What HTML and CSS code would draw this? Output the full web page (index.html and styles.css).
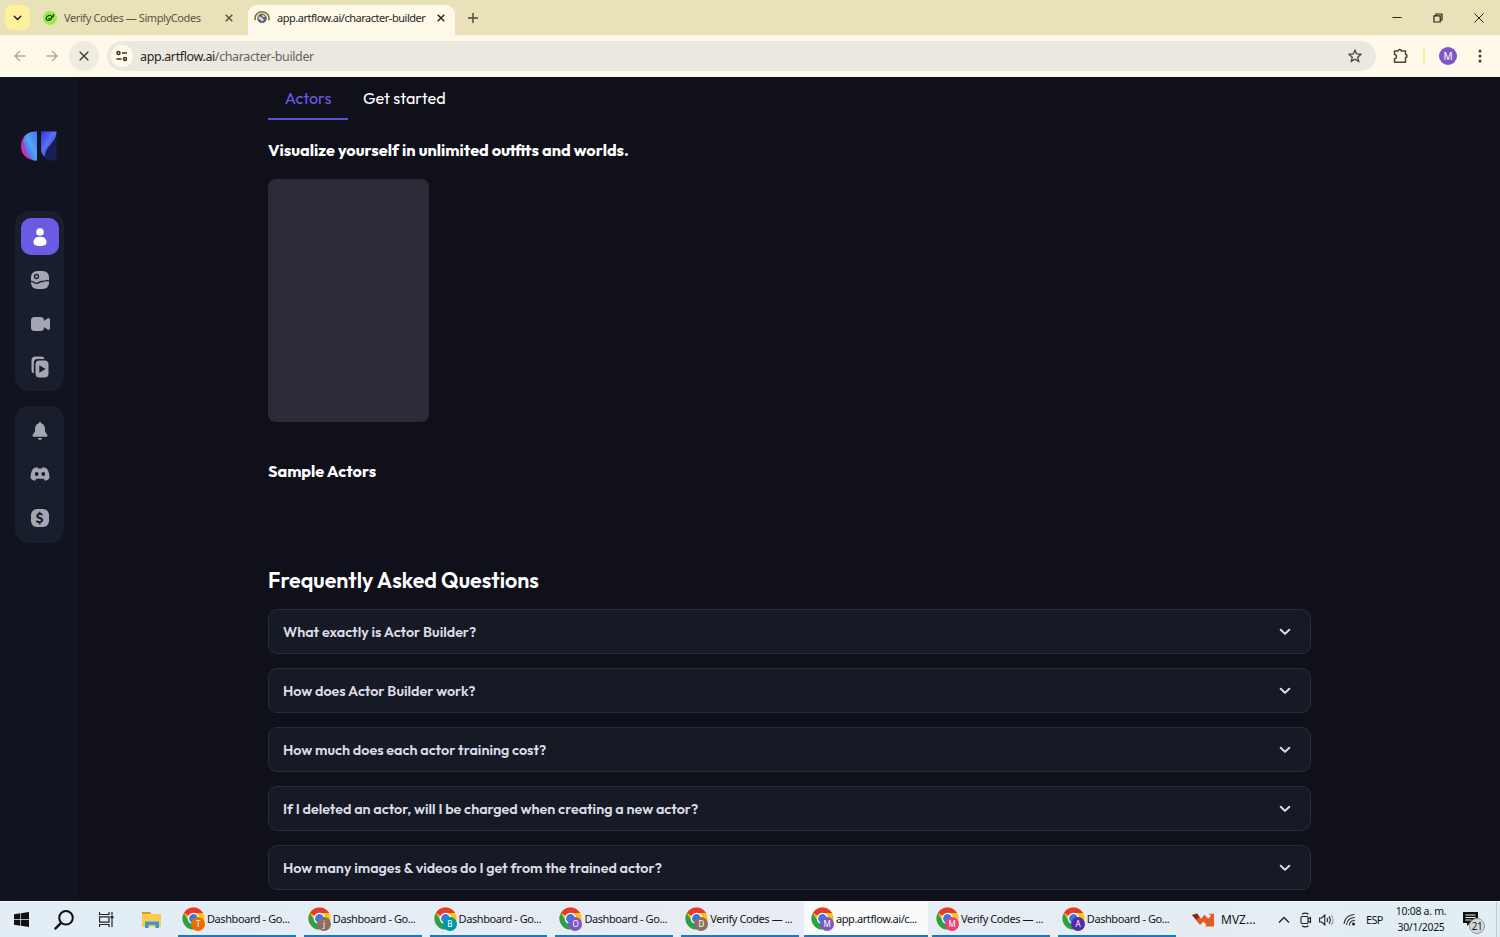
FILE: index.html
```html
<!DOCTYPE html>
<html lang="en">
<head>
    <meta charset="UTF-8">
    <meta name="viewport" content="width=device-width, initial-scale=1.0">
    <title>app.artflow.ai/character-builder</title>
    <link rel="stylesheet" href="styles.css">
</head>
<body>
    <!-- shared icons -->
    <svg class="defs" width="0" height="0">
        <symbol id="chrome" viewBox="0 0 24 24">
            <circle cx="12" cy="12" r="11.5" fill="#fbc116"/>
            <path d="M12 12 2 6.2A11.5 11.5 0 0 1 22 6.3H12z" fill="#e33b2e"/>
            <path d="M2 6.2A11.5 11.5 0 0 0 11.5 23.5L17 15 12 12 7 14.8z" fill="#2ba14b"/>
            <circle cx="12" cy="12" r="5.9" fill="#fff"/>
            <circle cx="12" cy="12" r="4.6" fill="#3b78e7"/>
        </symbol>
        <symbol id="close" viewBox="0 0 10 10">
            <path d="M1.7 1.7 8.3 8.3M8.3 1.7 1.7 8.3" fill="none" stroke="currentColor" stroke-width="1.5"/>
        </symbol>
        <symbol id="chevron" viewBox="0 0 12 8">
            <path d="M1.7 1.7 6 5.9 10.3 1.7" fill="none" stroke="currentColor" stroke-width="2" stroke-linecap="round" stroke-linejoin="round"/>
        </symbol>
    </svg>

    <div class="tab-strip">
        <div class="tab-search">
            <svg width="9" height="6"><use href="#chevron"/></svg>
        </div>
        <div class="tab">
            <svg width="14" height="14" viewBox="0 0 14 14">
                <circle cx="7" cy="7" r="7" fill="#9bea4f"/>
                <path d="M8.3 4.600C5 3.800 2.900 6 3.200 8c.4 2.200 4.200 1.700 5.600-.8M5.300 7.300l2 1.200 3.800-5.400M8.200 5.600h2.600" fill="none" stroke="#1c3b16" stroke-width="1.300"/>
            </svg>
            <span class="tab-title title-simply">Verify Codes — SimplyCodes</span>
            <svg class="tab-close" width="10" height="10"><use href="#close"/></svg>
        </div>
        <div class="tab tab-active">
            <svg width="16" height="16" viewBox="0 0 16 16">
                <path d="M1.200 10.300A7 7 0 1 1 14.800 10.300" fill="none" stroke="#7a6c13" stroke-width="1.500"/>
                <circle cx="8" cy="8.300" r="4.800" fill="#5e6268"/>
                <path d="M4.500 6.800c2-.8 2.800.4 3.800 1.300s1.700 1 1.200 2.300l-2 1.200c.2-1.800-2.600-2-3.300-3.300zM8.500 4.600l2.800 1.400-1.200 1.600-2-1.300z" fill="#d5d6d2"/>
            </svg>
            <span class="tab-title title-artflow">app.artflow.ai/character-builder</span>
            <svg class="tab-close" width="10" height="10"><use href="#close"/></svg>
        </div>
        <svg class="new-tab" width="10" height="10" viewBox="0 0 10 10"><path d="M5 0v10M0 5h10" stroke="#4a4632" stroke-width="1.400"/></svg>
        <div class="window-buttons">
            <svg width="10" height="10" viewBox="0 0 10 10"><path d="M.5 4.500h9" stroke="#25231b"/></svg>
            <svg width="10" height="10" viewBox="0 0 10 10"><path d="M1 2.800h6.200V9H1zM3 2.500V1h6v6H7.500" fill="none" stroke="#25231b" stroke-width="1.200"/></svg>
            <svg width="10" height="10" viewBox="0 0 10 10"><path d="M.5.5l9 9M9.500.5l-9 9" stroke="#25231b"/></svg>
        </div>
    </div>

    <div class="toolbar">
        <div class="nav-btn"><svg width="12" height="12" viewBox="0 0 12 12"><path d="M11.500 6H1.200M6 1 1 6l5 5" fill="none" stroke="#aaa797" stroke-width="1.400"/></svg></div>
        <div class="nav-btn"><svg width="12" height="12" viewBox="0 0 12 12"><path d="M.5 6h10.300M6 1l5 5-5 5" fill="none" stroke="#aaa797" stroke-width="1.400"/></svg></div>
        <div class="nav-btn nav-stop"><svg width="10" height="10" viewBox="0 0 10 10"><path d="M.7.7l8.600 8.600M9.300.7.7 9.300" stroke="#45433b" stroke-width="1.500"/></svg></div>
        <div class="omnibox">
            <div class="site-info">
                <svg width="12" height="12" viewBox="0 0 12 12"><g fill="none" stroke="#35342e" stroke-width="1.500"><circle cx="2.500" cy="3" r="1.500"/><path d="M6 3h5M.5 9h5"/><circle cx="9" cy="9" r="1.500"/></g></svg>
            </div>
            <div class="url">app.artflow.ai<span>/character-builder</span></div>
            <svg class="star" width="14" height="14" viewBox="0 0 14 14"><path d="M7 1.200 8.700 5l4.200.4-3.200 2.800 1 4.200L7 10.200l-3.700 2.200 1-4.200L1.100 5.400 5.300 5z" fill="none" stroke="#45433a" stroke-width="1.300"/></svg>
        </div>
        <svg class="extensions" width="16" height="16" viewBox="0 0 16 16"><path d="M1.500 3h3.700c0-2 3-2 3 0h4.300v3.600c2 0 2 3 0 3v4.600h-11v-3.500c2.600-.2 2.600-3.900 0-4.100z" fill="none" stroke="#4a4730" stroke-width="1.500" stroke-linejoin="round"/></svg>
        <div class="divider"></div>
        <div class="profile">M</div>
        <svg class="menu" width="4" height="14" viewBox="0 0 4 14" fill="#403e31"><circle cx="2" cy="2" r="1.500"/><circle cx="2" cy="7" r="1.500"/><circle cx="2" cy="12" r="1.500"/></svg>
    </div>

    <div class="app">
        <div class="sidebar">
            <svg class="logo" width="36" height="30" viewBox="0 0 36 30">
                <defs>
                    <linearGradient id="logoLeft" x1="0" y1="1" x2="1" y2="0"><stop offset="0" stop-color="#3d52e8"/><stop offset=".55" stop-color="#54a2f4"/><stop offset="1" stop-color="#3c78f0"/></linearGradient>
                    <linearGradient id="logoRight" x1="0" y1="0" x2="1" y2="1"><stop offset="0" stop-color="#3036d8"/><stop offset=".45" stop-color="#5b6ff5"/><stop offset="1" stop-color="#252b8c"/></linearGradient>
                </defs>
                <path d="M16 .5C5 .5 0 7 0 15s5 14.500 16 14.500z" fill="#cb2fae"/>
                <path d="M16 .5C8 .5 3 3.500 2.600 9 3 17 6 26 13 29.500h3z" fill="url(#logoLeft)"/>
                <path d="M20 .5h15.500v29H31c-7 0-11-4-11-11z" fill="#1a1d55"/>
                <path d="M20 .5h15.500C35 13 25 13 24 25.500c-2.500-1.800-4-4-4-7z" fill="url(#logoRight)"/>
            </svg>
            <div class="side-group">
                <div class="side-item side-active">
                    <svg width="14" height="20" viewBox="0 0 14 20" fill="#fff"><circle cx="7" cy="5" r="3.800"/><path d="M4.500 10h5c2.200 0 4 3 4 5.500C13.500 18 11 19 7 19S.5 18 .5 15.500C.5 13 2.300 10 4.500 10z"/></svg>
                </div>
                <div class="side-item">
                    <svg width="18" height="18" viewBox="0 0 18 18"><rect width="18" height="18" rx="6" fill="#a5a6b4"/><circle cx="5.500" cy="5.500" r="2" fill="none" stroke="#181e2b" stroke-width="1.300"/><path d="M0 10.500c2.500-.5 3.500 2.500 6 1.800 2.200-.6 2.800-2 5-1.800 2.500.2 4-2 7-.5" fill="none" stroke="#181e2b" stroke-width="1.300"/></svg>
                </div>
                <div class="side-item">
                    <svg class="video" width="19" height="14" viewBox="0 0 19 14" fill="#a5a6b4"><rect width="13" height="14" rx="3.500"/><path d="M12 4.500 16.500 1.500c1.500-.7 2.500 0 2.500 1.500v8c0 1.500-1 2.200-2.500 1.500L12 9.500z"/></svg>
                </div>
                <div class="side-item">
                    <svg class="clips" width="18" height="22" viewBox="0 0 18 22"><path d="M2.800 17.500C1.200 17 .5 15.800.5 14V4.500c0-2.500 1.500-4 4-4H10c1.700 0 3 .7 3.500 2.500H7C4.300 3 2.800 4.500 2.800 7z" fill="#a5a6b4"/><rect x="4.500" y="4.500" width="13" height="17" rx="4" fill="#a5a6b4"/><path d="M8.300 9.300v7.400l6.300-3.700z" fill="#181e2b"/></svg>
                </div>
            </div>
            <div class="side-group side-group-bottom">
                <div class="side-item">
                    <svg width="16" height="18" viewBox="0 0 16 18" fill="#a5a6b4"><path d="M8 0c.8 0 1 .5 1.100 1.200C11.500 1.800 13 3.800 13 7v2.500c.8 1.500 2.500 3 2.500 4.200 0 .8-.8 1.100-2 1.100h-11c-1.200 0-2-.3-2-1.100C.5 12.500 2.200 11 3 9.500V7c0-3.200 1.500-5.200 3.900-5.800C7 .5 7.200 0 8 0zM6 16h4c-.2 1.200-.9 2-2 2s-1.800-.8-2-2z"/></svg>
                </div>
                <div class="side-item">
                    <svg width="20" height="14" viewBox="0 0 20 14"><path d="M7.500.2 8 1.500h4l.5-1.300c2 .2 3.500.8 4.500 1.500 1.800 2.700 2.700 6 2.400 9.700-1.200 1.100-2.700 1.800-4.400 2.300l-1.200-2H6.200l-1.200 2C3.300 13.200 1.800 12.500.6 11.400.3 7.700 1.200 4.400 3 1.700 4 1 5.500.4 7.500.2z" fill="#a5a6b4"/><circle cx="6.700" cy="7" r="1.900" fill="#181e2b"/><circle cx="13.300" cy="7" r="1.900" fill="#181e2b"/></svg>
                </div>
                <div class="side-item">
                    <div class="credits">$</div>
                </div>
            </div>
        </div>

        <div class="content">
            <div class="page-tabs">
                <div class="page-tab page-tab-active">Actors</div>
                <div class="page-tab">Get started</div>
            </div>
            <h2 class="tagline">Visualize yourself in unlimited outfits and worlds.</h2>
            <div class="actor-placeholder"></div>
            <h2 class="sample-title">Sample Actors</h2>
            <h1 class="faq-title">Frequently Asked Questions</h1>
            <div class="faq-list">
                <div class="faq-item"><span>What exactly is Actor Builder?</span><svg width="12" height="8"><use href="#chevron"/></svg></div>
                <div class="faq-item"><span>How does Actor Builder work?</span><svg width="12" height="8"><use href="#chevron"/></svg></div>
                <div class="faq-item"><span>How much does each actor training cost?</span><svg width="12" height="8"><use href="#chevron"/></svg></div>
                <div class="faq-item"><span>If I deleted an actor, will I be charged when creating a new actor?</span><svg width="12" height="8"><use href="#chevron"/></svg></div>
                <div class="faq-item"><span>How many images &amp; videos do I get from the trained actor?</span><svg width="12" height="8"><use href="#chevron"/></svg></div>
            </div>
        </div>
    </div>

    <div class="taskbar">
        <div class="launchers">
            <svg width="15" height="15" viewBox="0 0 15 15" fill="#111"><path d="M0 2.200 6.300 1.300V7H0zM7 1.200 15 0v7H7zM0 7.800h6.300v5.900L0 12.800zM7 7.800h8V15l-8-1.200z"/></svg>
            <svg width="20" height="20" viewBox="0 0 20 20"><circle cx="12" cy="7.800" r="6.800" fill="none" stroke="#111" stroke-width="2"/><path d="M7.300 12.700.8 19.200" stroke="#111" stroke-width="2.400"/></svg>
            <svg width="15" height="15" viewBox="0 0 15 15"><path d="M.5 0v2.500h9.500V0M.5 4.800h9.500v5.400H.5zM.5 15v-2.500h9.500V15M13 0v3.500M13 7v8" fill="none" stroke="#222" stroke-width="1.200"/><path d="M11.500 4h3v2.500h-3z" fill="#222"/></svg>
            <svg class="explorer" width="20" height="18" viewBox="0 0 20 18"><path d="M0 1h8l1.500 2H19v13H0z" fill="#f9cd55"/><path d="M0 1h8l1.200 2H0z" fill="#d9992b"/><path d="M3 17v-6.500h14V17h-3.500v-3h-7v3z" fill="#3b96d2"/></svg>
        </div>
        <div class="tasks">
            <div class="task"><div class="task-icon"><svg width="23" height="23"><use href="#chrome"/></svg><b class="badge badge-orange">T</b></div><span>Dashboard - Go...</span></div>
            <div class="task"><div class="task-icon"><svg width="23" height="23"><use href="#chrome"/></svg><b class="badge badge-brown">j</b></div><span>Dashboard - Go...</span></div>
            <div class="task"><div class="task-icon"><svg width="23" height="23"><use href="#chrome"/></svg><b class="badge badge-teal">B</b></div><span>Dashboard - Go...</span></div>
            <div class="task"><div class="task-icon"><svg width="23" height="23"><use href="#chrome"/></svg><b class="badge badge-purple">O</b></div><span>Dashboard - Go...</span></div>
            <div class="task"><div class="task-icon"><svg width="23" height="23"><use href="#chrome"/></svg><b class="badge badge-brown">D</b></div><span>Verify Codes — ...</span></div>
            <div class="task task-active"><div class="task-icon"><svg width="23" height="23"><use href="#chrome"/></svg><b class="badge badge-purple">M</b></div><span>app.artflow.ai/c...</span></div>
            <div class="task"><div class="task-icon"><svg width="23" height="23"><use href="#chrome"/></svg><b class="badge badge-pink">M</b></div><span>Verify Codes — ...</span></div>
            <div class="task"><div class="task-icon"><svg width="23" height="23"><use href="#chrome"/></svg><b class="badge badge-indigo">A</b></div><span>Dashboard - Go...</span></div>
        </div>
        <div class="tray">
            <svg class="stock" width="22" height="14" viewBox="0 0 22 14"><path d="M0 2 5 .5l4 5.200 3.500-4 3.700 4L19 2.800l-2.500-2H22v12.700h-9l1.500-1.500-3-3.500-3.500 3.500z" fill="#e45a20"/><path d="M0 2 5 .5l2.500 3.300L4.500 7z" fill="#8c2a1c"/></svg>
            <span class="stock-name">MVZ...</span>
            <svg class="tray-up" width="12" height="8" viewBox="0 0 12 8"><path d="M1 6.500l5-5 5 5" fill="none" stroke="#222" stroke-width="1.300"/></svg>
            <svg class="meet" width="12" height="16" viewBox="0 0 12 16"><g fill="none" stroke="#222" stroke-width="1.100"><rect x="1" y="4.500" width="7" height="7" rx="1"/><path d="M8 7l2.500-1.500v5L8 9M2 2.300c2-1.400 4.500-1.400 6.500 0M2 13.700c2 1.400 4.500 1.400 6.500 0"/></g></svg>
            <svg class="volume" width="15" height="12" viewBox="0 0 15 12"><g fill="none" stroke="#222" stroke-width="1.100"><path d="M.6 4h2.200L5.800 1v10L2.800 8H.6zM7.800 4c1 1.200 1 2.800 0 4M9.800 2.500c2 2 2 5 0 7"/><path d="M12 1c2.500 3 2.500 7 0 10" stroke="#999"/></g></svg>
            <svg class="wifi" width="13" height="13" viewBox="0 0 13 13"><g fill="none" stroke="#333" stroke-width="1.100"><path d="M1 11C1.500 5.500 5.500 1.500 11.500 1.500M3.500 12c.5-4.500 3.500-7.500 8.500-7.500M6.300 12.500c.3-3 2.500-5 5.700-5"/></g><circle cx="10.500" cy="11" r="1.500" fill="#222"/></svg>
            <span class="lang">ESP</span>
            <div class="clock"><div>10:08 a. m.</div><div>30/1/2025</div></div>
            <div class="notify">
                <svg width="15" height="15" viewBox="0 0 15 15"><path d="M0 0h15v11H7l-3 3v-3H0z" fill="#111"/><path d="M2.500 3h10M2.500 5.500h10M2.500 8h6" stroke="#e5eef5"/></svg>
                <span class="notify-count">21</span>
            </div>
            <div class="show-desktop"></div>
        </div>
    </div>
</body>
</html>
```
FILE: styles.css
```css
* {
    margin: 0;
    padding: 0;
    box-sizing: border-box;
}

body {
    width: 1500px;
    height: 937px;
    overflow: hidden;
    display: flex;
    flex-direction: column;
    font-family: 'Segoe UI', 'Noto Sans', sans-serif;
    background: #10101b;
}

svg {
    display: block;
    flex-shrink: 0;
}

.defs {
    position: absolute;
}

/* browser tabs */
.tab-strip {
    height: 35px;
    flex-shrink: 0;
    display: flex;
    align-items: center;
    background: #e9e1b8;
    padding-left: 5px;
}

.tab-search {
    width: 25px;
    height: 25px;
    border-radius: 8px;
    background: #fff19b;
    color: #222;
    display: flex;
    align-items: center;
    justify-content: center;
}

.tab {
    width: 211px;
    height: 30px;
    margin-left: 7px;
    padding-left: 6px;
    display: flex;
    align-items: center;
    color: #5b563d;
    font-size: 11px;
    white-space: nowrap;
}

.tab-title {
    margin-left: 7px;
}

.title-simply {
    letter-spacing: -0.4px;
}

.title-artflow {
    letter-spacing: -0.48px;
    margin-left: 7px;
}

.tab-close {
    margin-left: auto;
    margin-right: 14px;
}

.tab-active {
    width: 207px;
    margin-left: 0;
    padding-bottom: 5px;
    align-self: flex-end;
    background: #fef9e9;
    border-radius: 9px 9px 0 0;
    color: #28261e;
}

.tab-active .tab-close {
    margin-right: 9px;
}

.new-tab {
    margin-left: 13px;
}

.window-buttons {
    margin-left: auto;
    margin-right: 16px;
    display: flex;
    gap: 31px;
}

/* address row */
.toolbar {
    height: 42px;
    flex-shrink: 0;
    display: flex;
    align-items: center;
    background: #fef9e9;
    padding-left: 5px;
}

.nav-btn {
    width: 30px;
    height: 30px;
    border-radius: 50%;
    margin-right: 2px;
    display: flex;
    align-items: center;
    justify-content: center;
    color: #45433b;
}

.nav-stop {
    background: #efebde;
    margin-right: 8px;
}

.omnibox {
    width: 1269px;
    height: 30px;
    border-radius: 15px;
    background: #ebe8df;
    display: flex;
    align-items: center;
    padding-left: 4px;
}

.site-info {
    width: 22px;
    height: 22px;
    border-radius: 50%;
    background: #fef9e9;
    display: flex;
    align-items: center;
    justify-content: center;
}

.url {
    margin-left: 7px;
    font-size: 12.5px;
    letter-spacing: -0.38px;
    color: #26251f;
}

.url span {
    color: #66645d;
}

.star {
    margin-left: auto;
    margin-right: 14px;
}

.extensions {
    margin-left: 17px;
}

.divider {
    width: 2px;
    height: 14px;
    margin-left: 14px;
    background: #f8e98c;
}

.profile {
    width: 18px;
    height: 18px;
    margin-left: 14px;
    border-radius: 50%;
    background: #7e57c2;
    color: #fff;
    font-size: 10px;
    line-height: 18px;
    text-align: center;
}

.menu {
    margin-left: 21px;
}

/* application */
.app {
    height: 824px;
    flex-shrink: 0;
    display: flex;
    overflow: hidden;
    font-family: Outfit, Lato, sans-serif;
    background: #10101b;
}

.sidebar {
    width: 78px;
    flex-shrink: 0;
    padding-top: 54px;
    background: #11141e;
}

.logo {
    margin-left: 21px;
}

.side-group {
    width: 49px;
    height: 180px;
    margin: 50px 0 0 15px;
    padding: 7px 0 0 6px;
    border-radius: 14px;
    background: #181e2b;
    display: flex;
    flex-direction: column;
    gap: 6.5px;
}

.side-group-bottom {
    height: 137px;
    margin-top: 15px;
    padding-top: 6px;
}

.side-item {
    width: 38px;
    height: 37px;
    padding-right: 1px;
    border-radius: 10px;
    display: flex;
    align-items: center;
    justify-content: center;
}

.side-active {
    background: #6a5be2;
}

.video,
.clips {
    margin-left: 1px;
}

.credits {
    width: 18px;
    height: 18px;
    border-radius: 6px;
    background: #a5a6b4;
    color: #181e2b;
    font-size: 14px;
    font-weight: bold;
    line-height: 18px;
    text-align: center;
}

.content {
    width: 1043px;
    margin-left: 190px;
    color: #fff;
}

.page-tabs {
    height: 43px;
    display: flex;
}

.page-tab {
    height: 43px;
    padding: 0 15px;
    font-size: 16.2px;
    line-height: 43px;
}

.page-tab-active {
    width: 80px;
    padding: 0;
    text-align: center;
    color: #6a5be2;
    border-bottom: 2px solid #5f50d4;
}

.tagline,
.sample-title {
    font-size: 16.3px;
    line-height: 22px;
    font-weight: bold;
    white-space: nowrap;
}

.tagline {
    margin-top: 19px;
}

.actor-placeholder {
    width: 161px;
    height: 243px;
    margin-top: 18px;
    border-radius: 8px;
    background: #2b2c37;
}

.sample-title {
    margin-top: 38px;
}

.faq-title {
    margin-top: 83px;
    font-size: 21.5px;
    line-height: 30px;
    font-weight: 600;
}

.faq-list {
    margin-top: 14px;
    display: flex;
    flex-direction: column;
    gap: 14px;
}

.faq-item {
    height: 45px;
    flex-shrink: 0;
    border: 1px solid #282b38;
    border-radius: 9px;
    background: #161a25;
    color: #dcdce8;
    display: flex;
    align-items: center;
    justify-content: space-between;
    padding: 0 19px 0 14px;
    font-size: 14.3px;
    font-weight: 600;
}

/* windows taskbar */
.taskbar {
    height: 36px;
    flex-shrink: 0;
    display: flex;
    background: linear-gradient(90deg, #e2edf6, #e8ecf4 50%, #e2eef4);
    border-top: 1px solid #f2f6fa;
    color: #151515;
}

.launchers {
    width: 178px;
    display: flex;
    align-items: center;
    padding-left: 14px;
    gap: 25px;
}

.explorer {
    margin-left: 3px;
}

.tasks {
    width: 996px;
    display: flex;
    gap: 8px;
}

.task {
    width: 117.8px;
    flex-shrink: 0;
    display: flex;
    align-items: center;
    padding-left: 4px;
    border-bottom: 2px solid #1c78c4;
    font-size: 11px;
    letter-spacing: -0.42px;
    white-space: nowrap;
}

.task-active {
    width: 124px;
    margin-left: -3px;
    margin-right: -4px;
    padding-left: 7px;
    background: #f8fafc;
}

.task-icon {
    position: relative;
    margin-right: 2px;
}

/* profile letter over the browser icon */
.badge {
    position: absolute;
    left: 9px;
    top: 10px;
    width: 14px;
    height: 14px;
    border-radius: 50%;
    color: #fff;
    font-size: 8px;
    font-weight: normal;
    line-height: 14px;
    text-align: center;
}

.badge-orange { background: #ef6c00; }
.badge-brown { background: #8d6e63; }
.badge-teal { background: #0097a7; }
.badge-purple { background: #7e57c2; }
.badge-pink { background: #ec407a; }
.badge-indigo { background: #512da8; }

.tray {
    flex: 1;
    display: flex;
    align-items: center;
    padding-left: 18px;
}

.stock-name {
    margin-left: 7px;
    width: 57px;
    font-size: 12px;
}

.meet {
    margin-left: 10px;
}

.volume {
    margin-left: 7px;
}

.wifi {
    margin-left: 9px;
}

.lang {
    margin-left: 10px;
    width: 29px;
    font-size: 11px;
    letter-spacing: -0.7px;
}

.clock {
    width: 52px;
    font-size: 10.5px;
    line-height: 15.5px;
    letter-spacing: -0.3px;
    text-align: center;
    white-space: nowrap;
}

.notify {
    position: relative;
    margin-left: 16px;
}

.notify-count {
    position: absolute;
    left: 6px;
    top: 6px;
    width: 16px;
    height: 16px;
    border: 1px solid #999;
    border-radius: 50%;
    background: #d3d8dc;
    font-size: 10px;
    line-height: 14px;
    letter-spacing: -0.5px;
    text-align: center;
}

.show-desktop {
    width: 4px;
    height: 35px;
    margin-left: auto;
    border-left: 1px solid #c3ccd2;
}
```
